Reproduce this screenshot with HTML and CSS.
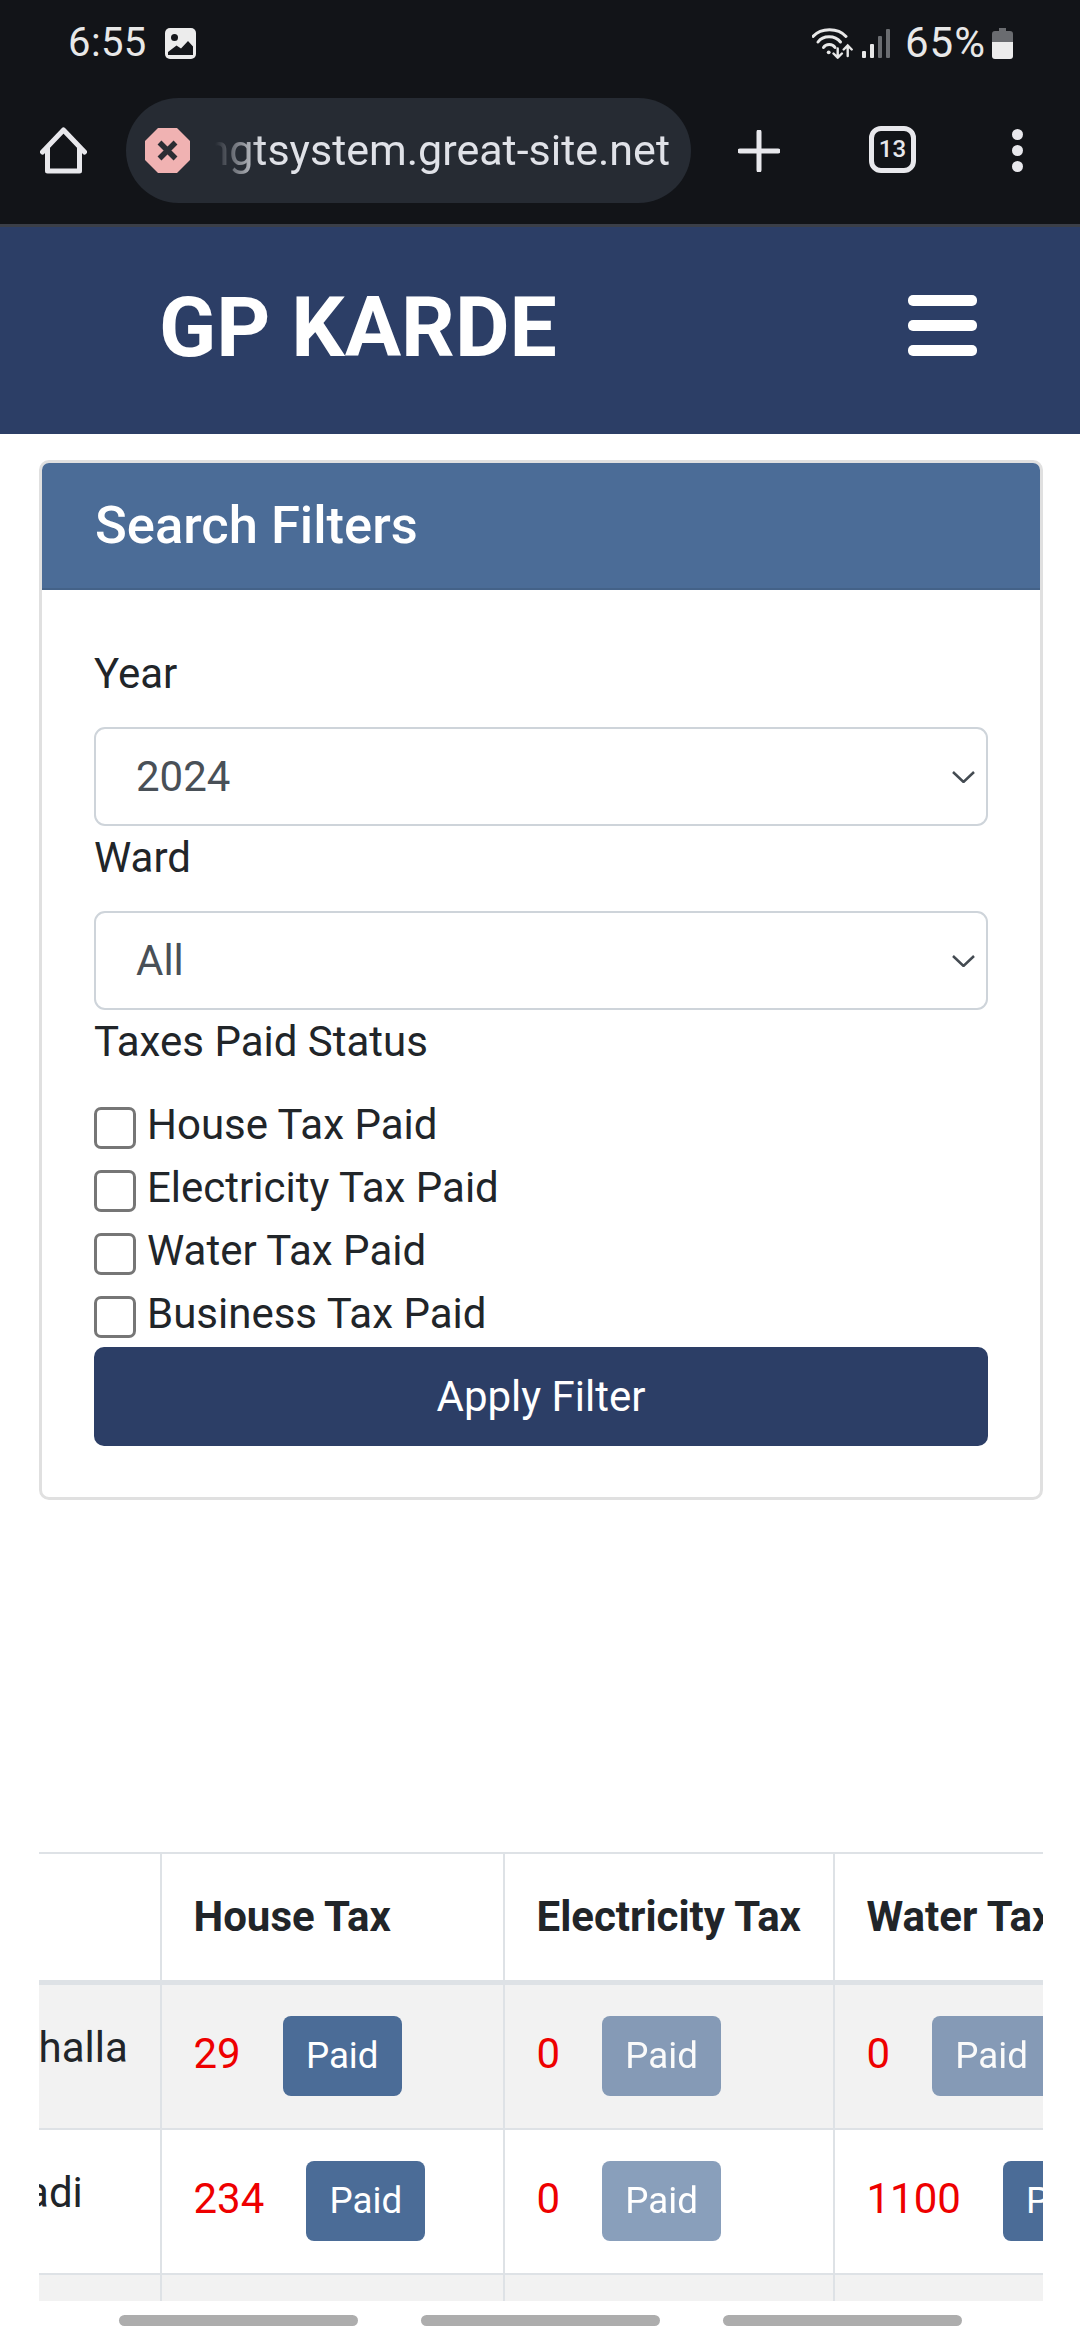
FILE: index.html
```html
<!DOCTYPE html>
<html lang="en">
<head>
    <meta charset="UTF-8">
    <meta name="viewport" content="width=device-width, initial-scale=1.0">
    <title>GP KARDE</title>
    <link rel="stylesheet" href="styles.css">
</head>
<body>
    <div class="status-bar">
        <div class="status-left">
            <span class="clock">6:55</span>
            <svg class="status-photo" viewBox="0 0 31 31">
                <rect width="31" height="31" rx="5" fill="#ececec"/>
                <circle cx="9.5" cy="9.5" r="3.5" fill="#15171b"/>
                <path d="M3 27 V24 L11.5 17.5 L16 20.5 L23 13 L28 18.5 V27 Z" fill="#15171b"/>
            </svg>
        </div>
        <div class="status-right">
            <svg class="status-wifi" viewBox="0 0 41 32" fill="none" stroke="#e8e8e8" stroke-linecap="round">
                <path d="M1 9.5 C9 0.5 26 0.5 34 9.5" stroke-width="3"/>
                <path d="M6 15 C11 8 23 8 28.500 15" stroke-width="3"/>
                <path d="M11.500 20.500 C14 16.500 20.500 16.500 23 20.500" stroke-width="3"/>
                <circle cx="16.700" cy="25.300" r="1.900" fill="#e8e8e8" stroke="none"/>
                <path d="M25.700 21.500 V30.500 M21.500 26.500 L25.700 30.700 L29.900 26.500" stroke-width="2.400"/>
                <path d="M35.700 29 V18.500 M31.700 22.500 L35.700 18.500 L39.700 22.500" stroke-width="2.400"/>
            </svg>
            <svg class="status-signal" viewBox="0 0 28 29">
                <rect x="0" y="22" width="4" height="7" rx="1" fill="#e8e8e8"/>
                <rect x="8" y="15" width="4" height="14" rx="1" fill="#e8e8e8"/>
                <rect x="16" y="7" width="4" height="22" rx="1" fill="#6a6c70"/>
                <rect x="24" y="0" width="4" height="29" rx="1" fill="#6a6c70"/>
            </svg>
            <span class="battery-text">65%</span>
            <svg class="status-battery" viewBox="0 0 21 31">
                <path d="M7 0 H14 V3 H18 Q21 3 21 6 V14 H0 V6 Q0 3 3 3 H7 Z" fill="#6a6c70"/>
                <path d="M0 14 H21 V28 Q21 31 18 31 H3 Q0 31 0 28 Z" fill="#ececec"/>
            </svg>
        </div>
    </div>

    <div class="toolbar">
        <svg class="tool-home" viewBox="0 0 47 47" fill="none" stroke="#e8e8ec" stroke-width="5" stroke-linejoin="round" stroke-linecap="round">
            <path d="M2.500 25 L23.500 3 L44.500 25 M7.500 21 V44 H39.500 V21"/>
        </svg>
        <div class="url-pill">
            <svg class="url-warning" viewBox="0 0 45 45">
                <path d="M13 0 H32 L45 13 V32 L32 45 H13 L0 32 V13 Z" fill="#f0b2b2"/>
                <path d="M14.500 14.500 L30.500 30.500 M30.500 14.500 L14.500 30.500" stroke="#2a2d33" stroke-width="5.500"/>
            </svg>
            <div class="url-text"><span>taxmngtsystem.great-site.net</span></div>
        </div>
        <svg class="tool-plus" viewBox="0 0 42 42" stroke="#e8e8ec" stroke-width="5" stroke-linecap="round">
            <path d="M21 2 V40 M2 21 H40"/>
        </svg>
        <div class="tab-count">13</div>
        <div class="tool-menu">
            <span class="menu-dot"></span>
            <span class="menu-dot"></span>
            <span class="menu-dot"></span>
        </div>
    </div>

    <nav class="navbar">
        <a class="brand" href="#">GP KARDE</a>
        <div class="hamburger">
            <span></span>
            <span></span>
            <span></span>
        </div>
    </nav>

    <div class="container">
        <div class="card">
            <div class="card-header">Search Filters</div>
            <div class="card-body">
                <label class="form-label" for="year">Year</label>
                <select class="form-select" id="year">
                    <option>2024</option>
                </select>
                <label class="form-label" for="ward">Ward</label>
                <select class="form-select" id="ward">
                    <option>All</option>
                </select>
                <div class="form-label">Taxes Paid Status</div>
                <div class="check-list">
                    <label class="check-row"><input type="checkbox">House Tax Paid</label>
                    <label class="check-row"><input type="checkbox">Electricity Tax Paid</label>
                    <label class="check-row"><input type="checkbox">Water Tax Paid</label>
                    <label class="check-row"><input type="checkbox">Business Tax Paid</label>
                </div>
                <button class="btn-apply">Apply Filter</button>
            </div>
        </div>

        <div class="table-wrap">
            <table class="tax-table">
                <colgroup>
                    <col class="col-name">
                    <col class="col-house">
                    <col class="col-electricity">
                    <col class="col-water">
                </colgroup>
                <thead>
                    <tr>
                        <th>No</th>
                        <th>House Tax</th>
                        <th>Electricity Tax</th>
                        <th>Water Tax</th>
                    </tr>
                </thead>
                <tbody>
                    <tr>
                        <td class="name-cell">Mohalla</td>
                        <td><span class="due">29</span><button class="btn-paid">Paid</button></td>
                        <td><span class="due">0</span><button class="btn-paid" disabled>Paid</button></td>
                        <td><span class="due">0</span><button class="btn-paid" disabled>Paid</button></td>
                    </tr>
                    <tr>
                        <td class="name-cell">Shadi</td>
                        <td><span class="due">234</span><button class="btn-paid">Paid</button></td>
                        <td><span class="due">0</span><button class="btn-paid" disabled>Paid</button></td>
                        <td><span class="due">1100</span><button class="btn-paid">Paid</button></td>
                    </tr>
                    <tr>
                        <td class="name-cell"></td>
                        <td><span class="due">0</span><button class="btn-paid" disabled>Paid</button></td>
                        <td><span class="due">0</span><button class="btn-paid" disabled>Paid</button></td>
                        <td><span class="due">0</span><button class="btn-paid" disabled>Paid</button></td>
                    </tr>
                </tbody>
            </table>
        </div>
    </div>

    <div class="gesture-bar">
        <span></span>
        <span></span>
        <span></span>
    </div>
</body>
</html>
```

FILE: styles.css
```css
* {
    box-sizing: border-box;
}
html, body {
    height: 2340px;
    overflow: hidden;
}
body {
    margin: 0;
    font-family: Roboto, "Liberation Sans", sans-serif;
    font-size: 42px;
    line-height: 63px;
    color: #212529;
    background-color: white;
}

/* phone status bar */
.status-bar {
    height: 88px;
    padding: 27px 67px 0 68px;
    display: flex;
    justify-content: space-between;
    align-items: flex-start;
    background-color: #121418;
    color: #e8e8e8;
}
.status-left, .status-right {
    display: flex;
    align-items: center;
    height: 32px;
}
.clock {
    font-size: 40px;
    line-height: 32px;
    letter-spacing: 0.4px;
}
.status-photo {
    width: 31px;
    height: 31px;
    margin-left: 18px;
}
.status-wifi {
    width: 41px;
    height: 32px;
}
.status-signal {
    width: 28px;
    height: 29px;
    margin-left: 9px;
}
.battery-text {
    font-size: 42px;
    line-height: 32px;
    letter-spacing: 1px;
    margin-left: 15px;
}
.status-battery {
    width: 21px;
    height: 31px;
    margin-left: 6px;
}

/* browser toolbar */
.toolbar {
    height: 139px;
    padding: 10px 0 0 40px;
    display: flex;
    align-items: flex-start;
    background-color: #121418;
    border-bottom: 3px solid #3b3f48;
}
.tool-home {
    width: 47px;
    height: 47px;
    margin-top: 29px;
}
.url-pill {
    width: 565px;
    height: 105px;
    margin-left: 39px;
    padding: 0 21px 0 19px;
    display: flex;
    align-items: center;
    background-color: #262b33;
    border-radius: 53px;
}
.url-warning {
    width: 45px;
    height: 45px;
    flex-shrink: 0;
}
.url-text {
    flex: 1;
    margin-left: 25px;
    overflow: hidden;
    display: flex;
    justify-content: flex-end;
    white-space: nowrap;
    color: #e0e2e8;
    font-size: 43px;
    -webkit-mask-image: linear-gradient(to right, transparent 0, black 48px);
    mask-image: linear-gradient(to right, transparent 0, black 48px);
}
.tool-plus {
    width: 42px;
    height: 42px;
    margin: 32px 0 0 47px;
}
.tab-count {
    width: 47px;
    height: 47px;
    margin: 28px 0 0 89px;
    border: 5px solid #e8e8ec;
    border-radius: 12px;
    color: #e8e8ec;
    font-size: 24px;
    font-weight: 500;
    line-height: 37px;
    text-align: center;
}
.tool-menu {
    margin: 31px 0 0 96px;
    display: flex;
    flex-direction: column;
    gap: 5px;
}
.menu-dot {
    width: 11px;
    height: 11px;
    border-radius: 50%;
    background-color: #e8e8ec;
}

/* site navbar */
.navbar {
    height: 207px;
    padding: 0 103px 10px 159px;
    display: flex;
    justify-content: space-between;
    align-items: center;
    background-color: #2c3e66;
}
.brand {
    margin-top: 4px;
    font-size: 84px;
    font-weight: 700;
    line-height: 100px;
    color: white;
    text-decoration: none;
}
.hamburger {
    width: 69px;
    display: flex;
    flex-direction: column;
    gap: 14px;
}
.hamburger span {
    height: 11px;
    border-radius: 5px;
    background-color: white;
}

.container {
    padding: 26px 37px 0 39px;
}

/* filter card */
.card {
    border: 3px solid #e0e0e0;
    border-radius: 10px;
    overflow: hidden;
}
.card-header {
    height: 127px;
    padding-left: 53px;
    background-color: #4b6c97;
    border-bottom: 2px solid #446288;
    color: white;
    font-size: 52.5px;
    font-weight: 500;
    line-height: 125px;
}
.card-body {
    padding: 52px 52px 51px;
}
.form-label {
    display: block;
    margin-bottom: 21px;
}
.form-select {
    display: block;
    width: 100%;
    height: 99px;
    margin-top: 22px;
    padding: 0 60px 0 40px;
    appearance: none;
    -webkit-appearance: none;
    border: 2px solid #ced4da;
    border-radius: 11px;
    font-family: inherit;
    font-size: 42px;
    color: #495057;
    background-color: white;
    background-image: url("data:image/svg+xml,%3Csvg xmlns='http://www.w3.org/2000/svg' viewBox='0 0 23 12'%3E%3Cpath d='M1 1 L11.5 11 L22 1' fill='none' stroke='%23444b52' stroke-width='2.5'/%3E%3C/svg%3E");
    background-repeat: no-repeat;
    background-position: right 11px center;
    background-size: 23px 12px;
}
.check-list {
    margin-top: -1px;
}
.check-row {
    display: flex;
    align-items: flex-start;
    height: 63px;
}
.check-row input {
    appearance: none;
    -webkit-appearance: none;
    width: 42px;
    height: 42px;
    margin: 14px 11px 0 0;
    border: 3px solid #767676;
    border-radius: 7px;
    background-color: white;
}
.btn-apply {
    display: block;
    width: 100%;
    height: 99px;
    margin-top: 2px;
    border: none;
    border-radius: 10px;
    background-color: #2c3e66;
    color: white;
    font-family: inherit;
    font-size: 42px;
}

/* tax table, scrolled sideways inside its wrapper */
.table-wrap {
    width: 1004px;
    height: 449px;
    margin-top: 352px;
    overflow: hidden;
}
.tax-table {
    width: 1306px;
    margin-left: -92px;
    table-layout: fixed;
    border-collapse: collapse;
}
.col-name {
    width: 213px;
}
.col-house {
    width: 343px;
}
.col-electricity {
    width: 330px;
}
.col-water {
    width: 420px;
}
.tax-table th, .tax-table td {
    padding: 30.5px 31.5px 32.5px;
    border: 2px solid #dee2e6;
    text-align: left;
    vertical-align: top;
    white-space: nowrap;
}
.tax-table th {
    font-weight: 700;
    border-bottom-width: 5px;
}
.tax-table td.name-cell {
    padding-left: 29px;
}
.tax-table tbody tr:nth-child(odd) {
    background-color: #f2f2f2;
}
.due {
    color: #ee0000;
}
.btn-paid {
    height: 80px;
    width: 119px;
    margin-left: 42px;
    padding: 0;
    border: none;
    border-radius: 8px;
    background-color: #4b6c97;
    color: white;
    font-family: inherit;
    font-size: 36.75px;
    line-height: 80px;
    vertical-align: baseline;
}
.btn-paid:disabled {
    opacity: 0.65;
}

/* android gesture pills */
.gesture-bar {
    padding-top: 14px;
    display: flex;
    justify-content: center;
    gap: 63px;
}
.gesture-bar span {
    width: 239px;
    height: 11px;
    border-radius: 6px;
    background-color: #adadad;
}
```
